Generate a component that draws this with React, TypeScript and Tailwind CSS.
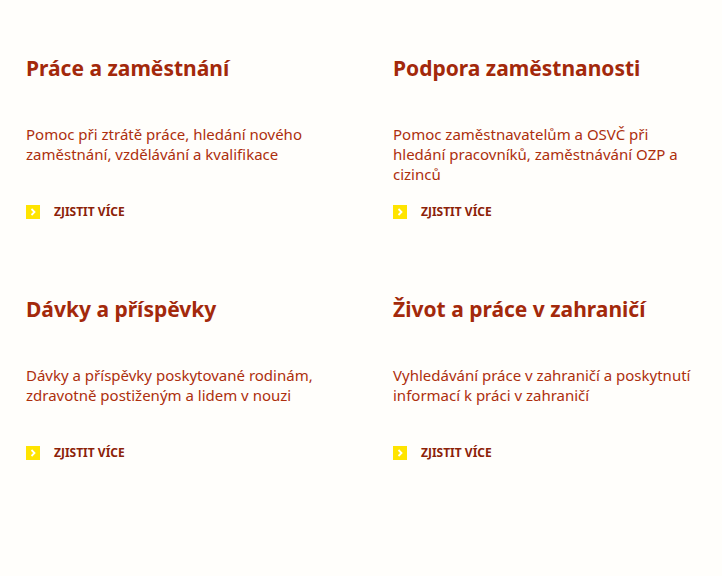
const ITEMS = [
  {
    title: 'Práce a zaměstnání',
    text: 'Pomoc při ztrátě práce, hledání nového zaměstnání, vzdělávání a kvalifikace',
  },
  {
    title: 'Podpora zaměstnanosti',
    text: 'Pomoc zaměstnavatelům a OSVČ při hledání pracovníků, zaměstnávání OZP a cizinců',
  },
  {
    title: 'Dávky a příspěvky',
    text: 'Dávky a příspěvky poskytované rodinám, zdravotně postiženým a lidem v nouzi',
  },
  {
    title: 'Život a práce v zahraničí',
    text: 'Vyhledávání práce v zahraničí a poskytnutí informací k práci v zahraničí',
  },
];

function Card({ title, text }: { title: string; text: string }) {
  return (
    <div className="flex h-[241px] flex-col">
      <h2 className="h-[68px] text-[21px] leading-[24px] font-bold text-[#a3290b]">{title}</h2>
      <p className="h-[79px] w-[300px] text-[15px] leading-[20px] text-[#ad2f0d]">{text}</p>
      <a href="#" className="flex items-center gap-[14px] text-[12px] font-bold text-[#8c2208] uppercase">
        <span className="flex h-[14px] w-[14px] items-center justify-center bg-[#ffe400]">
          <svg width="8" height="8" viewBox="0 0 8 8">
            <path d="M2.5 1 L5.5 4 L2.5 7" stroke="#fff" strokeWidth="1.8" fill="none" />
          </svg>
        </span>
        Zjistit více
      </a>
    </div>
  );
}

export default function App() {
  return (
    <div
      className="min-h-[576px] bg-[#fffefb] pt-[56px] pl-[26px]"
      style={{ fontFamily: '"Noto Sans", "DejaVu Sans", sans-serif' }}
    >
      <div className="grid w-[696px] grid-cols-[367px_329px]">
        {ITEMS.map((item) => (
          <Card key={item.title} {...item} />
        ))}
      </div>
    </div>
  );
}
